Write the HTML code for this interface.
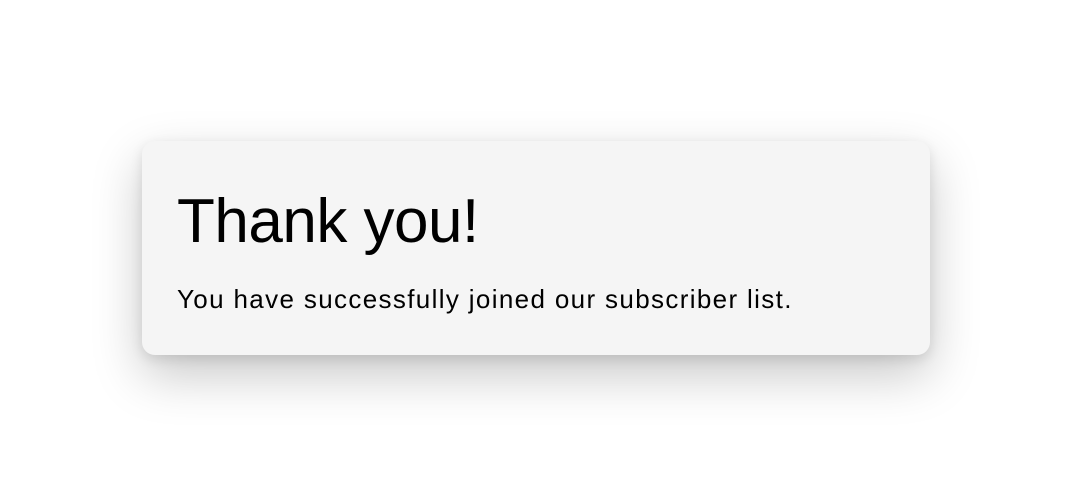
<!DOCTYPE html>
<html><head><style>
html,body{margin:0;width:1072px;height:498px;background:#fff;overflow:hidden;font-family:"Liberation Sans",sans-serif;}
.card{position:absolute;left:142px;top:141px;width:788px;height:214px;background:#f5f5f5;border-radius:13px;box-shadow:0 20px 50px rgba(0,0,0,0.22),0 4px 12px rgba(0,0,0,0.10);}
h1{position:absolute;left:35px;top:45px;margin:0;font-weight:400;font-size:62px;line-height:72px;color:#000;letter-spacing:-0.5px;}
p{position:absolute;left:35px;top:143px;margin:0;font-size:26px;line-height:30px;color:#000;letter-spacing:1.35px;}
</style></head><body>
<div class="card"><h1>Thank you!</h1><p>You have successfully joined our subscriber list.</p></div>
</body></html>
